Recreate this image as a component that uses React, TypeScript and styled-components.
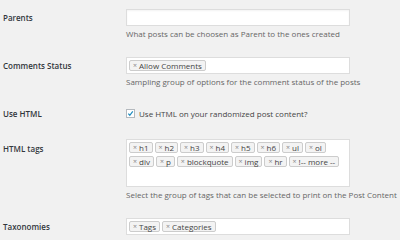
import styled, { createGlobalStyle } from "styled-components";

const GlobalStyle = createGlobalStyle`
  body {
    margin: 0;
    background-color: #f1f1f1;
    font-family: "Open Sans", "Noto Sans", sans-serif;
    color: #23282d;
  }
`;

const Form = styled.div`
  display: flex;
  flex-direction: column;
  gap: 17px;
  padding: 9px 0 0 3px;
`;

const Row = styled.div`
  display: grid;
  grid-template-columns: 123px 224px;
  align-items: start;
`;

const Label = styled.div<{ $offset?: number }>`
  font-size: 8px;
  font-weight: 600;
  line-height: 17px;
  color: #32373c;
  padding-top: ${(p) => p.$offset ?? 0}px;
`;

const Field = styled.div`
  display: flex;
  flex-direction: column;
`;

const TextInput = styled.div`
  height: 17px;
  box-sizing: border-box;
  background: #fff;
  border: 1px solid #ddd;
  box-shadow: inset 0 1px 2px rgba(0, 0, 0, 0.05);
`;

const TagBox = styled.div<{ $tall?: boolean }>`
  box-sizing: border-box;
  min-height: ${(p) => (p.$tall ? 48 : 17)}px;
  background: #fff;
  border: 1px solid #ddd;
  padding: 2px;
  display: flex;
  flex-wrap: wrap;
  align-content: flex-start;
  gap: 3px 2px;
`;

const Tag = styled.span`
  box-sizing: border-box;
  height: 11px;
  display: inline-flex;
  align-items: center;
  gap: 2px;
  padding: 0 3px;
  background: #f3f3f3;
  border: 1px solid #ccc;
  border-radius: 2px;
  font-size: 8px;
  color: #444;
  line-height: 1;
`;

const Remove = styled.span`
  color: #888;
  font-size: 7px;
`;

const Description = styled.div`
  margin-top: 2px;
  font-size: 8px;
  line-height: 12px;
  color: #666;
  white-space: nowrap;
`;

const CheckRow = styled.label`
  height: 17px;
  display: flex;
  align-items: center;
  gap: 4px;
  font-size: 8px;
  color: #444;
`;

const CheckBox = styled.span`
  box-sizing: border-box;
  width: 9px;
  height: 9px;
  background: #fff;
  border: 1px solid #b4b9be;
  display: inline-flex;
  align-items: center;
  justify-content: center;
`;

function Tags({ items, tall }: { items: string[]; tall?: boolean }) {
  return (
    <TagBox $tall={tall}>
      {items.map((t) => (
        <Tag key={t}>
          <Remove>×</Remove>
          {t}
        </Tag>
      ))}
    </TagBox>
  );
}

export default function App() {
  return (
    <>
      <GlobalStyle />
      <Form>
        <Row>
          <Label>Parents</Label>
          <Field>
            <TextInput />
            <Description>What posts can be choosen as Parent to the ones created</Description>
          </Field>
        </Row>
        <Row>
          <Label>Comments Status</Label>
          <Field>
            <Tags items={["Allow Comments"]} />
            <Description>Sampling group of options for the comment status of the posts</Description>
          </Field>
        </Row>
        <Row>
          <Label>Use HTML</Label>
          <Field>
            <CheckRow>
              <CheckBox>
                <svg width="7" height="7" viewBox="0 0 8 8">
                  <path d="M1.5 4.2 L3.2 6 L6.6 1.6" fill="none" stroke="#1e8cbe" strokeWidth="1.4" />
                </svg>
              </CheckBox>
              Use HTML on your randomized post content?
            </CheckRow>
          </Field>
        </Row>
        <Row>
          <Label $offset={1}>HTML tags</Label>
          <Field>
            <Tags
              tall
              items={["h1", "h2", "h3", "h4", "h5", "h6", "ul", "ol", "div", "p", "blockquote", "img", "hr", "!-- more --"]}
            />
            <Description>Select the group of tags that can be selected to print on the Post Content</Description>
          </Field>
        </Row>
        <Row>
          <Label>Taxonomies</Label>
          <Field>
            <Tags items={["Tags", "Categories"]} />
            <Description>Select which taxonomies to be selected to print on the post</Description>
          </Field>
        </Row>
      </Form>
    </>
  );
}
